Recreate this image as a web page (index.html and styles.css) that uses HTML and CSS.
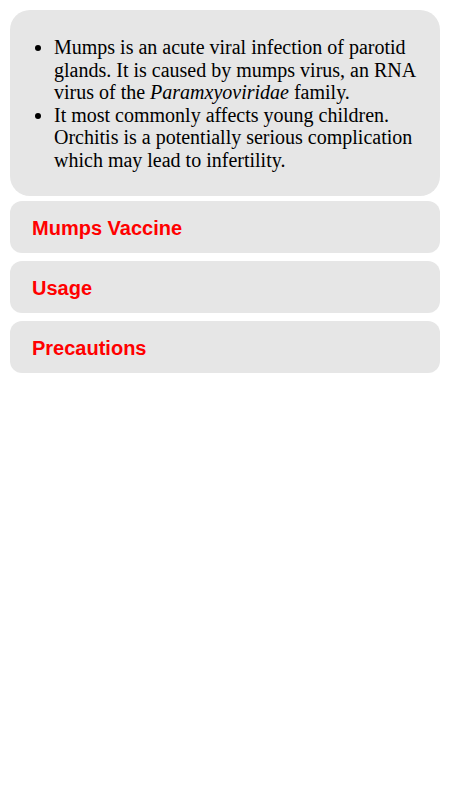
FILE: index.html
```html
<!DOCTYPE html>
<html lang="en">
<head>
    <meta charset="UTF-8">
    <meta name="viewport" content="width=device-width, initial-scale=1.0">
    <title>Mumps</title>
    <link rel="stylesheet" href="styles.css">
</head>
<body>

    <div class="intro">
        <ul class="facts">
            <li>Mumps is an acute viral infection of parotid glands. It is caused by mumps virus, an RNA virus of the <i>Paramxyoviridae</i> family.</li>
            <li>It most commonly affects young children. Orchitis is a potentially serious complication which may lead to infertility.</li>
        </ul>
    </div>

    <div class="section">Mumps Vaccine</div>
    <div class="section">Usage</div>
    <div class="section">Precautions</div>

</body>
</html>
```

FILE: styles.css
```css
* {
    margin: 0;
    padding: 0;
    box-sizing: border-box;
}

body {
    background: #fff;
    padding: 10px;
    display: flex;
    flex-direction: column;
    gap: 8px;
}

.intro {
    background-color: #e6e6e6;
    border-radius: 20px;
    padding: 26px 14px 25px 14px;
    font-family: "Liberation Serif", "Times New Roman", serif;
    font-size: 20px;
    line-height: 22.5px;
    color: #000;
    margin-bottom: -3px;
}

.facts {
    padding-left: 30px;
}

.section {
    background-color: #e6e6e6;
    border-radius: 12px;
    padding: 16px 22px 14px 22px;
    height: 52px;
    font-family: "Liberation Sans", Arial, sans-serif;
    font-weight: bold;
    font-size: 20px;
    line-height: 22px;
    color: #ff0000;
}
```
